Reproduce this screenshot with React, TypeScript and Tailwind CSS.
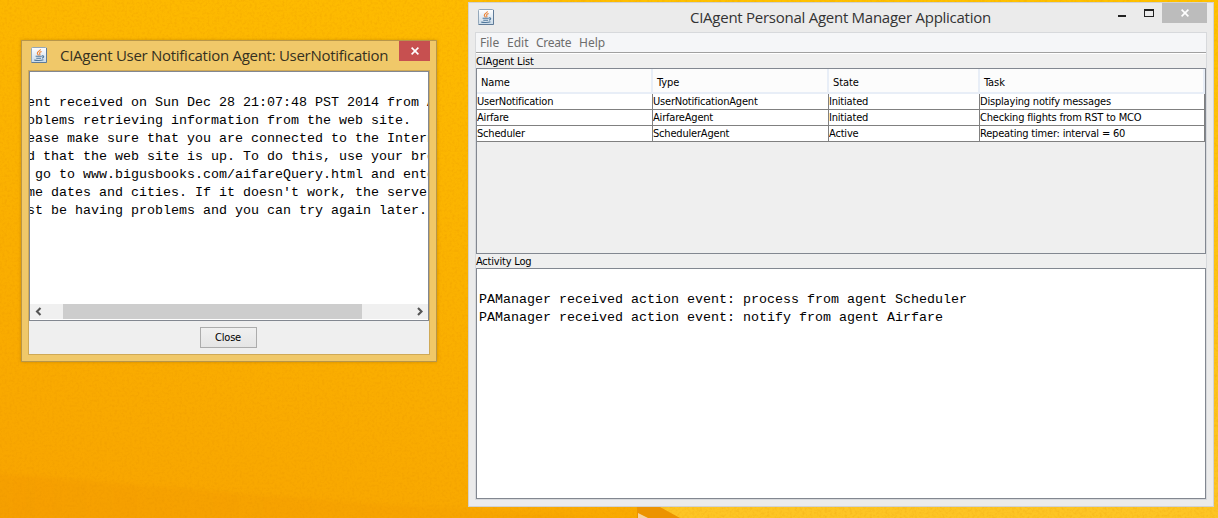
const agents = [
  ["UserNotification", "UserNotificationAgent", "Initiated", "Displaying notify messages"],
  ["Airfare", "AirfareAgent", "Initiated", "Checking flights from RST to MCO"],
  ["Scheduler", "SchedulerAgent", "Active", "Repeating timer: interval = 60"],
];

const notice = [
  "ent received on Sun Dec 28 21:07:48 PST 2014 from Airfare",
  "oblems retrieving information from the web site.",
  "ease make sure that you are connected to the Internet",
  "d that the web site is up. To do this, use your browser",
  " go to www.bigusbooks.com/aifareQuery.html and enter",
  "me dates and cities. If it doesn't work, the server",
  "st be having problems and you can try again later.",
];

const log = [
  "PAManager received action event: process from agent Scheduler",
  "PAManager received action event: notify from agent Airfare",
];

function JavaIcon() {
  return (
    <svg width="16" height="16" viewBox="0 0 16 16" className="block shrink-0">
      <defs>
        <linearGradient id="tile" x1="0" y1="0" x2="0" y2="1">
          <stop offset="0" stopColor="#ffffff" />
          <stop offset="1" stopColor="#c9dae8" />
        </linearGradient>
      </defs>
      <rect x="0.5" y="0.5" width="15" height="15" rx="1" fill="url(#tile)" stroke="#93a7ba" />
      <path d="M.5 15.5H15.5V1" fill="none" stroke="#5f7b98" />
      <path d="M9.3 2.2C9.9 3.6 6.2 4.6 6.3 6.2C6.4 7.2 7.4 7.4 7.4 8.4M10.6 4.4C8.8 5.1 8.2 5.8 8.8 6.7C9.2 7.3 8.8 7.9 8.5 8.3" fill="none" stroke="#eb8235" strokeWidth="1.1" />
      <path d="M4.6 9.3H10.8M5.3 11.2H10M3.2 13C5 13.7 10.5 13.7 12.4 12.8M11 8.9C13.4 8.6 13.1 10.7 10.9 11.1" fill="none" stroke="#50789c" strokeWidth="1.1" />
    </svg>
  );
}

function CloseGlyph() {
  return (
    <svg width="8" height="8" viewBox="0 0 8 8" className="block">
      <path d="M.6 .6L7.4 7.4M7.4 .6L.6 7.4" stroke="#fff" strokeWidth="1.6" />
    </svg>
  );
}

function Wallpaper() {
  return (
    <svg className="absolute inset-0" width="1218" height="518" viewBox="0 0 1218 518">
      <defs>
        <linearGradient id="base" x1="0" y1="1" x2="0.6" y2="0">
          <stop offset="0" stopColor="#f8a400" />
          <stop offset="0.5" stopColor="#fbb200" />
          <stop offset="1" stopColor="#ffbe00" />
        </linearGradient>
        <linearGradient id="right" x1="0" y1="0" x2="0" y2="1">
          <stop offset="0" stopColor="#ffc100" />
          <stop offset="1" stopColor="#fdc525" />
        </linearGradient>
        <linearGradient id="fold" x1="0" y1="0" x2="1" y2="0">
          <stop offset="0" stopColor="#f29500" stopOpacity="0.35" />
          <stop offset="1" stopColor="#f29b00" stopOpacity="0.25" />
        </linearGradient>
        <filter id="soften"><feGaussianBlur stdDeviation="2" /></filter>
        <filter id="grain" x="0" y="0" width="100%" height="100%" colorInterpolationFilters="sRGB">
          <feTurbulence type="fractalNoise" baseFrequency="0.4" numOctaves="2" seed="4" />
          <feColorMatrix values="0 0 0 0 0.88  0 0 0 0 0.55  0 0 0 0 0  1.6 0 0 0 -0.68" />
        </filter>
      </defs>
      <rect width="1218" height="518" fill="url(#base)" />
      <path d="M640 0H1218V518H640Z" fill="url(#right)" />
      <path d="M-10 473C120 482 300 500 480 510L640 520H-10Z" fill="url(#fold)" filter="url(#soften)" />
      <rect width="1218" height="518" filter="url(#grain)" opacity="0.3" />
      <path d="M637 507H660L680 518H637Z" fill="#ec9300" />
      <path d="M638 513L648 518H638Z" fill="#f6d3a0" />
    </svg>
  );
}

function NotificationWindow() {
  return (
    <section className="absolute left-[21px] top-[40px] flex h-[322px] w-[416px] flex-col border border-[#b8964a] bg-[#f0c869] px-[6px] pb-[6px] shadow-[0_0_3px_rgba(120,80,0,0.35)]">
      <header className="flex h-[29px] shrink-0 items-start pl-[3px]">
        <div className="pt-[6px]"><JavaIcon /></div>
        <h1 className="ml-[13px] mt-[4px] w-[329px] whitespace-nowrap font-['Open_Sans',sans-serif] text-[15px] leading-[20px] tracking-[-0.28px] text-[#35301f]">
          CIAgent User Notification Agent: UserNotification
        </h1>
        <button className="ml-[10px] flex h-[20px] w-[31px] shrink-0 items-center justify-center bg-[#c75050]"><CloseGlyph /></button>
      </header>
      <div className="flex h-[285px] flex-col border border-[#cfa956] bg-[#efefef]">
        <div className="flex h-[250px] shrink-0 flex-col border border-[#828790] bg-white">
          <pre className="mt-[22px] h-[210px] overflow-hidden font-['Liberation_Mono',monospace] text-[13.333px] leading-[18px] text-black">
            <span className="-ml-[3px] block">{notice.join("\n")}</span>
          </pre>
          <div className="flex h-[15px] items-center bg-[#f0f0f0]">
            <svg width="33" height="15" className="block"><path d="M10.5 4L7 7.5L10.5 11" fill="none" stroke="#555" strokeWidth="2.1" /></svg>
            <div className="h-[15px] w-[299px] bg-[#cdcdcd]" />
            <svg width="66" height="15" className="block"><path d="M56 4L59.5 7.5L56 11" fill="none" stroke="#555" strokeWidth="2.1" /></svg>
          </div>
        </div>
        <div className="flex justify-center pr-[2px] pt-[6px]">
          <button className="h-[21px] w-[57px] border border-[#acacac] bg-linear-to-b from-[#f0f0f0] to-[#e5e5e5] font-['DejaVu_Sans_Condensed','DejaVu_Sans',sans-serif] text-[11px] leading-[19px] tracking-[-0.2px] text-black">Close</button>
        </div>
      </div>
    </section>
  );
}

function ManagerWindow() {
  return (
    <section className="absolute left-[468px] top-[2px] flex h-[505px] w-[746px] flex-col border border-[#d2d2d2] bg-[#ebebeb] px-[6px] font-['DejaVu_Sans_Condensed','DejaVu_Sans',sans-serif] text-[11px] text-black">
      <header className="flex h-[29px] shrink-0 items-start pl-[3px]">
        <div className="pt-[6px]"><JavaIcon /></div>
        <h1 className="ml-[196px] mt-[4px] w-[302px] whitespace-nowrap font-['Open_Sans',sans-serif] text-[15px] leading-[20px] tracking-[-0.26px] text-[#333]">
          CIAgent Personal Agent Manager Application
        </h1>
        <svg width="48" height="20" className="ml-[124px] block shrink-0">
          <path d="M3 12H11V14H3Z" fill="#222" />
          <path d="M29 6H39V14H29ZM30 8V13H38V8Z" fill="#222" fillRule="evenodd" />
        </svg>
        <button className="-ml-[1px] flex h-[20px] w-[45px] shrink-0 items-center justify-center bg-[#bcbcbc]"><CloseGlyph /></button>
      </header>
      <div className="flex h-[468px] flex-col border border-[#d7d9dc] bg-[#efefef]">
        <nav className="flex h-[20px] shrink-0 items-center gap-[9px] border-b border-[#a0a0a0] bg-[#f5f6f8] pl-[4px] font-['Noto_Sans',sans-serif] text-[12px] leading-[18px] text-[#6d6d6d]">
          <span className="w-[18px]">File</span>
          <span className="w-[20px]">Edit</span>
          <span className="w-[34px] tracking-[-0.3px]">Create</span>
          <span>Help</span>
        </nav>
        <h2 className="h-[15px] shrink-0 border-t border-white leading-[16px] tracking-[-0.15px]">CIAgent List</h2>
        <div className="h-[186px] shrink-0 border border-[#828790]">
          <div className="grid grid-cols-[176px_176px_151px_225px] bg-[#fcfcfc]">
            {["Name", "Type", "State", "Task"].map((title) => (
              <div key={title} className="h-[25px] border-b-2 border-r-2 border-[#e8eef7] pl-[4px] leading-[27px] tracking-[-0.1px]">{title}</div>
            ))}
          </div>
          {agents.map((row) => (
            <div key={row[0]} className="grid grid-cols-[176px_176px_151px_225px] bg-white">
              {row.map((cell) => (
                <div key={cell} className="h-[16px] overflow-hidden whitespace-nowrap border-b border-r border-[#808080] leading-[15px] tracking-[-0.19px]">{cell}</div>
              ))}
            </div>
          ))}
        </div>
        <h2 className="h-[14px] shrink-0 leading-[15px] tracking-[-0.2px]">Activity Log</h2>
        <div className="h-[231px] shrink-0 border border-[#828790] bg-white pl-[2px] pt-[22px]">
          <pre className="font-['Liberation_Mono',monospace] text-[13.333px] leading-[18px]">{log.join("\n")}</pre>
        </div>
      </div>
    </section>
  );
}

export default function App() {
  return (
    <main className="relative h-[518px] w-[1218px] overflow-hidden bg-[#fcb400]">
      <Wallpaper />
      <NotificationWindow />
      <ManagerWindow />
    </main>
  );
}
